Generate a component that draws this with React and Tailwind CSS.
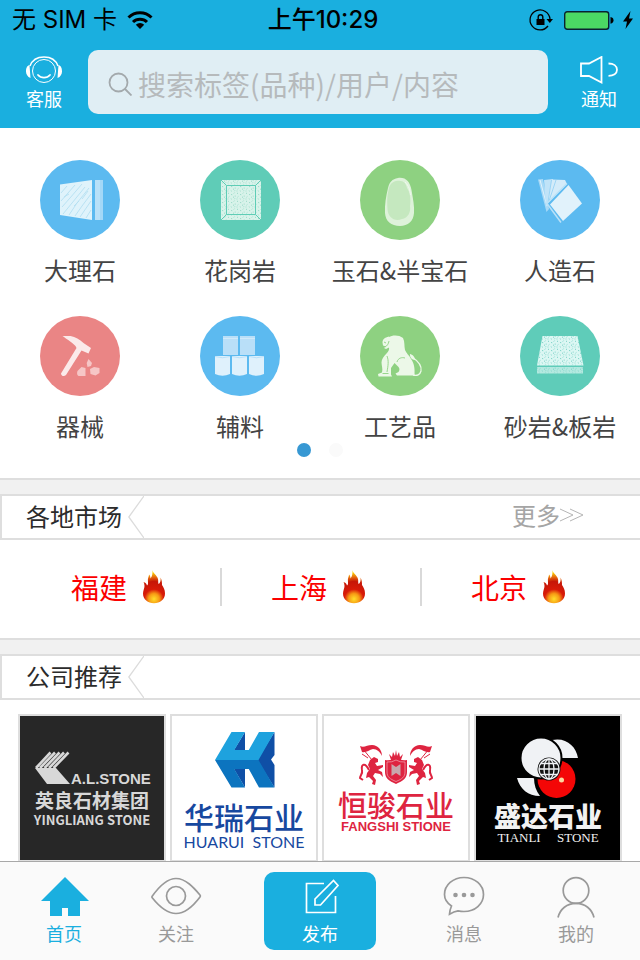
import { useState } from 'react'

const Speckle = ({ id, color }) => (
  <pattern id={id} width="9" height="8" patternUnits="userSpaceOnUse">
    <g stroke={color} strokeWidth="1">
      <path d="M1 1l1 .6M4.5 2l.4 1.2M7.6 .6l-.8 .9M2.4 4.4l-.9 .8M6 5l1 .3M8.2 3.6v1M3.8 6.6l.9 .6M.6 7h.8M7.4 7.2l.5-.8" />
    </g>
  </pattern>
)

function MarbleIcon() {
  return (
    <>
      <path d="M20 24.5 52 20v40l-32-5z" fill="#dff3fb" />
      <g stroke="#b4e0f2" strokeWidth="0.9" fill="none">
        <path d="M21 33l6-7M21 41l14-16M22 47l8-9 12-14M23 54l9-11 13-16M29 55l8-12 12-15M35 56l7-10 9-12M40 57l11-16M46 58l5-8M24 37l5-3M34 46l5-5M42 39l6-8" />
      </g>
      <path d="M55 20h5v40h-5z" fill="#b9e1f8" />
      <path d="M60 20h3v40h-3z" fill="#a3d8f7" />
    </>
  )
}

function GraniteIcon() {
  return (
    <>
      <Speckle id="granite" color="#97d8c6" />
      <path d="M21 20h40v40H21z" fill="#d8f3ea" />
      <path d="M21 20h40v40H21z" fill="url(#granite)" />
      <path d="M26.500 25.500h29v29h-29zM21 20l5.500 5.500M61 20l-5.500 5.500M21 60l5.500-5.500M61 60l-5.500-5.500" fill="none" stroke="#5fcdb6" />
    </>
  )
}

function JadeIcon() {
  return (
    <>
      <path d="M38 18c8-1 12 4 13.500 12 1.500 9 3 16 2.500 23-.5 8-6 13-14 13-9 0-14.500-5-15-13-.4-8 1-17 3-25 1.500-6 4-9 10-10z" fill="#def2da" />
      <path d="M36 21c7-1.500 10 2 11 7 3 4 4 11 3 18 1 6-2 12-8 13-7 3-14-1-14.500-10-.5-8-.4-13 1-19 1-5 3-8 7.500-9z" fill="#c5e8bf" />
      <path d="M45 22c4 4 5 8 5.500 13" stroke="#f0f9ee" fill="none" />
    </>
  )
}

function PanelsIcon() {
  return (
    <>
      <path d="M18 19.500l5-.5 6 30-2.500 3z" fill="#a7d9f7" />
      <path d="M20 20l7 26" stroke="#e1f2fb" />
      <path d="M24 20l9-1-5 24-2 4z" fill="#c0e3f8" />
      <path d="M32 19.500l13 .5 2 4-20 20z" fill="#d3ebf9" />
      <path d="M31.500 20l-3.500 22M36 20l-7 21" stroke="#8fcff4" strokeWidth="0.8" />
      <path d="M47 23.500 27 43.500l14 19" fill="none" stroke="#b9e1f8" strokeWidth="1.500" />
      <path d="M48.500 25 62 43.500 43 61 30 44.500z" fill="#e1f2fb" />
    </>
  )
}

function HammerIcon() {
  return (
    <>
      <path d="M22.500 20h8c5 1 9 3.500 13 7l7.500 5-2.500 5.500-7-3L26 59c-2 2-5 1-5-1.500L36.500 32l-1-2c-5-5-9-7-13-10z" fill="#fbeaea" />
      <path d="M37.500 55l4-4 4 1v8h-6c-2 0-3-2-2-5zM48.500 43l3.500 4-1 3-3.500 1-.8-4zM50 53l4-2 5.500 1v5l-4 2.500-5-1.500z" fill="#f6c6c6" />
    </>
  )
}

function SuppliesIcon() {
  return (
    <>
      <path d="M23 20h15v19H23zM40 20h15v19H40z" fill="#b9dff8" />
      <path d="M23 22.500h15M40 22.500h15" stroke="#d0eafa" />
      {[15, 32, 49].map((x) => (
        <g key={x}>
          <path d={`M${x} 40h15v18q-7.500 3.500-15 0z`} fill="#dff1fc" />
          <path d={`M${x} 40.500q7.500 2.500 15 0`} stroke="#a8d8f7" strokeWidth="0.700" fill="none" />
        </g>
      ))}
    </>
  )
}

function LionIcon() {
  return (
    <>
      <path
        d="M29 21c3-2 10-2.500 14 1 2 4 1 8 2 12 1 3 4 5 6 9 3 4 4 9 3.500 16.500H37l-1.500-2 3-1.500c1.500-2 1-4 0-5l-4-4-3.500 5v6.500l1 2H18.500l-.5-2.500 4-1.500c1-4-.5-7-.5-10 0-3 2-6 5-9 2-2 3-4 2.500-6l-3 1.500-2-1 2-1.500-3-1-.5-3c0-3 2-5 6.500-6z"
        fill="#ecf8e8"
      />
      <path d="M37 46c1-4 5-5 8-4M24 26l2 1M29 25c-.5 3-2 5-4 6M27 40c2 5 1 10 0 16M22.500 57.500h6" stroke="#8ed181" strokeWidth="0.9" fill="none" />
      <path d="M52 41c6 4 10 9 9 14-1 4-4 5-8 4" stroke="#ecf8e8" strokeWidth="1.300" fill="none" />
      <path d="M50 38c2.500.5 5 3 5 6-3 0-5.500-3-5-6z" fill="#ecf8e8" />
    </>
  )
}

function SlabIcon() {
  return (
    <>
      <Speckle id="slab" color="#78d0c4" />
      <path d="M22.500 20h35L63.500 49.500H17z" fill="#dcf7f3" />
      <path d="M22.500 20h35L63.500 49.500H17z" fill="url(#slab)" />
      <path d="M17 51h46v6.500H17z" fill="#b4e9e0" />
      <path d="M17 51h46v6.500H17z" fill="url(#slab)" />
    </>
  )
}

const categories = [
  { name: '大理石', color: '#5cbaf0', Icon: MarbleIcon },
  { name: '花岗岩', color: '#5fccb7', Icon: GraniteIcon },
  { name: '玉石&半宝石', color: '#8ed181', Icon: JadeIcon },
  { name: '人造石', color: '#5cbaf0', Icon: PanelsIcon },
  { name: '器械', color: '#ea8585', Icon: HammerIcon },
  { name: '辅料', color: '#5cbaf0', Icon: SuppliesIcon },
  { name: '工艺品', color: '#8ed181', Icon: LionIcon },
  { name: '砂岩&板岩', color: '#5fccb9', Icon: SlabIcon },
]

const cities = ['福建', '上海', '北京']

function StatusBar() {
  return (
    <div className="grid h-10 grid-cols-3 items-center pr-1.5 pl-3 font-[Inter,'Noto_Sans_CJK_SC',sans-serif] text-black">
      <div className="flex items-center gap-2.5 text-2xl leading-10 whitespace-nowrap">
        无 SIM 卡
        <svg className="h-5 w-[26px]" viewBox="0 0 26 20" aria-label="Wi-Fi">
          <g fill="none" stroke="#000" strokeWidth="3">
            <path d="M1.500 7.500a16.300 16.300 0 0 1 23 0" />
            <path d="M6 12a10 10 0 0 1 14 0" />
          </g>
          <path d="M8.800 14.800a6 6 0 0 1 8.400 0L13 19z" />
        </svg>
      </div>
      <div className="text-center text-2xl leading-10 font-medium whitespace-nowrap">上午10:29</div>
      <div className="flex items-center justify-end gap-2">
        <svg className="h-6 w-7" viewBox="0 0 28 24" aria-label="Rotation lock">
          <path d="M20 18a10 10 0 1 1 2-7" fill="none" stroke="#000" strokeWidth="1.300" />
          <path d="M18.500 11h6.500l-3.200 4z" />
          <path d="M8.500 11h8v6h-8z" />
          <path d="M10.200 11V9a2.300 2.300 0 0 1 4.600 0v2" fill="none" stroke="#000" strokeWidth="1.400" />
        </svg>
        <svg className="h-6 w-[50px]" viewBox="0 0 50 24" aria-label="Battery">
          <rect x="0.700" y="3.700" width="44" height="17.600" rx="2.500" fill="#4bd964" stroke="#0a2230" strokeWidth="1.400" />
          <path d="M46.500 9c2 .4 3 1.500 3 3.300s-1 3-3 3.400z" />
        </svg>
        <svg className="h-6 w-3" viewBox="0 0 12 24" aria-label="Charging">
          <path d="M8.500 3 1 13.500h4L3.500 21 11 10.500H7z" />
        </svg>
      </div>
    </div>
  )
}

function Header() {
  return (
    <header className="shrink-0 bg-[#1aafdf]">
      <StatusBar />
      <div className="flex h-[88px] items-start text-white">
        <button type="button" className="flex w-[88px] flex-col items-center pt-4 text-lg leading-6">
          <svg className="mb-0.5 h-7 w-10" viewBox="0 0 40 28" fill="none" stroke="#fff">
            <circle cx="20" cy="15" r="11.500" />
            <path d="M6 10C8 4.500 13 1 20 1s12 3.500 14 9" strokeWidth="1.500" />
            <path d="M5.500 9c-3 1-3.500 4-3.500 6.500S3.500 21 6.500 22zM34.500 9c3 1 3.500 4 3.500 6.500S36.500 21 33.500 22z" fill="#fff" stroke="none" />
            <path d="M14 19c3 3.500 9 3.500 12 0" strokeWidth="1.800" strokeLinecap="round" />
          </svg>
          客服
        </button>
        <label className="mt-2.5 flex h-16 min-w-0 flex-1 items-center rounded-[10px] bg-[#e0eef4] pt-1 pl-5">
          <svg className="size-6 shrink-0" viewBox="0 0 24 24" fill="none" stroke="#a3a9ac" strokeWidth="1.800">
            <circle cx="10.500" cy="10.500" r="9" />
            <path d="M17 17l6.500 6.500" />
          </svg>
          <input
            type="search"
            aria-label="搜索"
            placeholder="搜索标签(品种)/用户/内容"
            className="ml-1.5 h-12 min-w-0 flex-1 bg-transparent text-[28px] text-gray-700 outline-none placeholder:text-[#b6babc]"
          />
        </label>
        <button type="button" className="flex w-[92px] flex-col items-center pt-4 pl-2.5 text-lg leading-6">
          <svg className="mb-0.5 h-7 w-10" viewBox="0 0 40 28" fill="none" stroke="#fff" strokeWidth="1.800">
            <path d="M2 7.500h8L22.500 1v25.500L10 20H2z" />
            <path d="M29.500 7.500c5 0 8.500 2.500 8.500 6.300s-3.500 6-8.500 6" />
          </svg>
          通知
        </button>
      </div>
    </header>
  )
}

function Categories() {
  return (
    <section className="border-b-2 border-[#dedede] bg-white pt-8 pb-5">
      <div className="grid grid-cols-4 gap-y-[31px]">
        {categories.map(({ name, color, Icon }) => (
          <button key={name} type="button" className="flex flex-col items-center text-2xl leading-[30px] whitespace-nowrap text-[#444]">
            <svg className="mb-[15px] size-20" viewBox="0 0 80 80">
              <circle cx="40" cy="40" r="40" fill={color} />
              <Icon />
            </svg>
            {name}
          </button>
        ))}
      </div>
      <div className="mt-px flex h-4 items-center justify-center gap-[18px]">
        <span className="size-3.5 rounded-full bg-[#3798d3]" />
        <span className="size-3.5 rounded-full bg-[#fafafa]" />
      </div>
    </section>
  )
}

function SectionTitle({ title, more }) {
  return (
    <div className="mt-3.5 flex h-[46px] items-center border-y-2 border-l-2 border-[#dedede] bg-white pl-6 text-2xl">
      <h2 className="pb-0.5 text-[#2b2b2b]">{title}</h2>
      <svg className="ml-1.5 h-[42px] w-4" viewBox="0 0 16 42" fill="none" stroke="#dcdcdc" strokeWidth="1.300">
        <path d="M16 0 .8 21 16 42" />
      </svg>
      {more && (
        <a href="#markets" className="mr-14 ml-auto flex items-center pb-1 text-[#a5a5a5]">
          更多
          <svg className="h-4 w-6" viewBox="0 0 24 16" fill="none" stroke="#b5b5b5">
            <path d="M0 2l13 6-13 6M10 2l13 6-13 6" />
          </svg>
        </a>
      )}
    </div>
  )
}

function Flame() {
  return (
    <svg className="h-9 w-[30px]" viewBox="0 0 30 36">
      <defs>
        <radialGradient id="flame" cx="13" cy="30" r="27" gradientUnits="userSpaceOnUse">
          <stop offset="0" stopColor="#ffdf2b" />
          <stop offset="0.2" stopColor="#f79a14" />
          <stop offset="0.36" stopColor="#d81a08" />
          <stop offset="0.65" stopColor="#c61607" />
          <stop offset="0.82" stopColor="#e8700f" />
          <stop offset="1" stopColor="#fce000" />
        </radialGradient>
      </defs>
      <path
        d="M11.500 1c.3 3.500 4.500 5 5.500 9 .4 2 0 3.500.5 5 1.500-.8 2.500-3 2-6.500 1.500 2.500 1.500 5 1.500 7.500 1.500 2.500 3 4.500 3 8.500 0 6-5 9.700-11 9.700S2 30.500 2 24.500c0-3 1.500-5 1.500-7.500 0-1.500-.5-3-1-4 2 .7 3 1.800 3.500 3.500 2-1.500.5-4 1-7C7.400 8 8 7 8 5.500c1 1 1.500 2.500 1.500 4C11.500 7 11.500 4 11.500 1z"
        fill="url(#flame)"
      />
    </svg>
  )
}

function Markets() {
  return (
    <section>
      <SectionTitle title="各地市场" more />
      <div className="grid h-[100px] grid-cols-3 items-center border-b-2 border-[#dedede] bg-white px-5">
        {cities.map((city) => (
          <button
            key={city}
            type="button"
            className="-mt-1 flex h-[38px] items-center justify-center gap-3.5 border-l-2 border-[#d9d9d9] text-[28px] text-[#fb0000] first:border-transparent"
          >
            {city}
            <Flame />
          </button>
        ))}
      </div>
    </section>
  )
}

function YingliangLogo() {
  return (
    <div className="h-full bg-[#272727] text-center font-bold text-[#d8d8d8]">
      <svg className="mx-auto h-[72px] w-36" viewBox="0 0 144 72">
        <path d="M16 52 30.500 36.500M20 52 35 36.500M24.500 52 39.500 36.500M29 52 44 36.500M33.500 52 48.500 36.500" stroke="#d8d8d8" strokeWidth="2.600" />
        <path d="M15 52h21l14 16H27z" fill="#d8d8d8" />
        <text x="51" y="68" fill="#d8d8d8" fontFamily="Liberation Sans, sans-serif" fontSize="15" fontWeight="700">
          A.L.STONE
        </text>
      </svg>
      <p className="text-[19px] leading-6">英良石材集团</p>
      <p className="text-[13px] leading-4 whitespace-nowrap">YINGLIANG STONE</p>
    </div>
  )
}

function HuaruiLogo() {
  return (
    <div className="h-full bg-white text-center text-[#17489f]">
      <svg className="mx-auto h-[84px] w-36" viewBox="0 0 144 84">
        <path d="M73 16v18H62zM73 71.500V53H62zM102.500 16v23l-3.500 4.500 3.500 5.500v22.500L85 44z" fill="#0f4fa6" />
        <path d="M43 44 59.500 16H73L62.300 34h14.500L87 16h15.500L86.500 44z" fill="#1ea2de" />
        <path d="M43 44h43.500l16 27.500H87L76.800 53H62.300L73 71.500H59.500z" fill="#0c74bf" />
      </svg>
      <p className="text-3xl leading-8 font-medium">华瑞石业</p>
      <p className="font-[Lato,sans-serif] text-base leading-5 whitespace-pre">HUARUI  STONE</p>
    </div>
  )
}

function FangshiLogo() {
  const horse = (
    <g>
      <path d="M36 30c4 2 7-1 12-1 6 0 10 5 10 11-2-4-5-7-9-7-4 1-7 4-11 3z" />
      <path d="M39 33l9 11M38 38l6 4" stroke="#de2440" strokeWidth="1" />
      <path d="M46 44l4-3 4 2v3l-3 1 2 3 6-1v2l-5 3 4 2 1 5-3-3-5-1-2 3 3 4-1 5-3-1 1-3-4-4-3 1 1-5 3-4-2-4z" />
      <path d="M45 54c-4-8-8-6-7 0 1 4-2 5-2 8l3 2" fill="none" stroke="#de2440" strokeWidth="2" />
    </g>
  )
  return (
    <div className="h-full bg-white text-center font-bold text-[#de2440]">
      <svg className="mx-auto h-[73px] w-36" viewBox="0 0 144 73" fill="#de2440">
        {horse}
        <g transform="matrix(-1 0 0 1 144 0)">{horse}</g>
        <path d="M65 38l3 3 1-5 2 4 1-6 1 6 2-4 1 5 3-3-2 6H67z" />
        <path d="M61 44q6 1 11-2 5 3 11 2v12c0 6-4 9-11 12-7-3-11-6-11-12z" />
        <path d="M63 46q5 .5 9-2 4 2.500 9 2v10c0 5-3 7-9 9.500-6-2.500-9-4.500-9-9.500z" fill="none" stroke="#f4a9b4" strokeWidth="0.700" />
        <path d="M67.500 48l4.500 3 4.500-3v12L72 57l-4.500 3z" fill="#c9a7ac" />
      </svg>
      <p className="text-[29px] leading-[30px] font-medium">恒骏石业</p>
      <p className="mt-0.5 font-['Liberation_Sans',sans-serif] text-[13px] leading-3 whitespace-nowrap">FANGSHI STIONE</p>
    </div>
  )
}

function TianliLogo() {
  return (
    <div className="h-full bg-black text-center text-[#f2f2f2]">
      <svg className="mx-auto h-[86px] w-36" viewBox="0 0 144 86">
        <path d="M76 24c14-3 24 6 26 18H86c0-7-4-14-10-18zM41 62h17c0 7 2 13 6 18-12 0-20-7-23-18z" fill="#f0f2f5" />
        <circle cx="80.500" cy="63" r="19" fill="#f40606" />
        <circle cx="65" cy="42" r="20.500" fill="#f0f2f5" stroke="#000" strokeWidth="2" />
        <circle cx="73" cy="53" r="11.500" fill="#111" />
        <g fill="none" stroke="#f0f2f5" strokeWidth="1.300">
          <circle cx="73" cy="53" r="10" />
          <ellipse cx="73" cy="53" rx="5" ry="10" />
          <path d="M73 43v20M63 53h20M65 47.500h16M65 58.500h16" />
        </g>
        <circle cx="85.500" cy="64" r="2.500" fill="#fcd9a0" />
      </svg>
      <p className="text-[27px] leading-7 font-black">盛达石业</p>
      <p className="mt-0.5 font-['Liberation_Serif',serif] text-[13px] leading-3 whitespace-pre">TIANLI     STONE</p>
    </div>
  )
}

const companies = [
  { name: '英良石材集团', Logo: YingliangLogo },
  { name: '华瑞石业', Logo: HuaruiLogo },
  { name: '恒骏石业', Logo: FangshiLogo },
  { name: '盛达石业', Logo: TianliLogo },
]

function Companies() {
  return (
    <section>
      <SectionTitle title="公司推荐" />
      <div className="grid grid-cols-4 gap-1 bg-white px-[18px] pt-3.5">
        {companies.map(({ name, Logo }) => (
          <a key={name} href="#company" className="block aspect-square overflow-hidden border-2 border-[#dedede]">
            <Logo />
          </a>
        ))}
      </div>
    </section>
  )
}

const tabs = [
  {
    name: '首页',
    icon: <path d="M27 3l24 24h-9v15H30v-8h-6v8H12V27H3z" fill="currentColor" stroke="none" />,
  },
  {
    name: '关注',
    icon: (
      <>
        <path d="M2 22.500C8 14 16 4.500 26 4.500S44 14 50 21q.8 1 0 2C44 31 36 39.500 26 39.500S8 31 2 23.500z" />
        <circle cx="26" cy="22" r="9.500" />
      </>
    ),
  },
  {
    name: '发布',
    primary: true,
    icon: (
      <>
        <path d="M30 9.500H12.500v29h29V22" />
        <path d="M21 31v-6L39.500 6.500l4.500 5L26.500 31z" />
      </>
    ),
  },
  {
    name: '消息',
    icon: (
      <>
        <path d="M13.500 32C9 29 6.500 25 6.500 20.500 6.500 11 15 3.500 26 3.500S45.500 11 45.500 20.500 37 37.500 26 37.500q-3 0-6-.6-4 .6-8.500 3.300.5-5 2-8.200z" />
        <g fill="currentColor" stroke="none">
          <circle cx="17.500" cy="21" r="2.300" />
          <circle cx="26" cy="21" r="2.300" />
          <circle cx="34.500" cy="21" r="2.300" />
        </g>
      </>
    ),
  },
  {
    name: '我的',
    icon: (
      <>
        <circle cx="26" cy="16.500" r="12.800" />
        <path d="M8 43.500C10 35 17 29.300 26 29.300S42 35 44 43.500" />
      </>
    ),
  },
]

function TabBar() {
  const [active, setActive] = useState('首页')

  const tone = (tab) => {
    if (tab.primary) return 'mx-8 rounded-[10px] bg-[#1aafdf] text-white'
    return tab.name === active ? 'text-[#1aafdf]' : 'text-[#999]'
  }

  return (
    <nav className="flex h-[99px] shrink-0 items-start border-t border-[#a8a8a8] bg-[#fafafa] px-2 pt-2.5">
      {tabs.map((tab) => (
        <button
          key={tab.name}
          type="button"
          onClick={() => setActive(tab.name)}
          className={`flex h-[78px] flex-1 flex-col items-center pt-0.5 text-lg leading-6 ${tone(tab)}`}
        >
          <svg className="mb-[3px] h-11 w-[52px]" viewBox="0 0 52 44" fill="none" stroke="currentColor" strokeWidth="1.700">
            {tab.icon}
          </svg>
          {tab.name}
        </button>
      ))}
    </nav>
  )
}

export default function App() {
  return (
    <div className="flex h-screen flex-col bg-[#f1f1f1] font-['Noto_Sans_CJK_SC',sans-serif]">
      <Header />
      <main className="flex-1 overflow-y-auto [scrollbar-width:none]">
        <Categories />
        <Markets />
        <Companies />
      </main>
      <TabBar />
    </div>
  )
}
